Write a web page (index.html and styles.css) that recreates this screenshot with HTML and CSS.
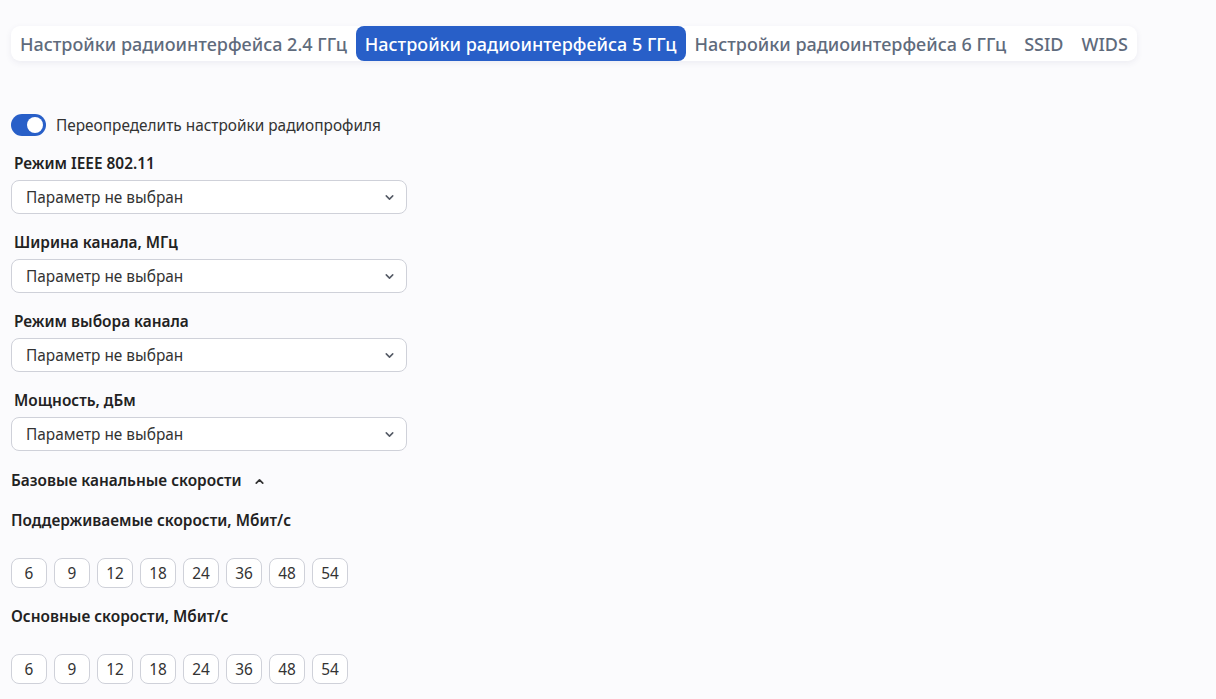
FILE: index.html
```html
<!DOCTYPE html>
<html lang="ru">
<head>
    <meta charset="UTF-8">
    <meta name="viewport" content="width=device-width, initial-scale=1.0">
    <title>Радиоинтерфейсы</title>
    <link rel="stylesheet" href="styles.css">
</head>
<body>
    <div class="page">
        <nav class="tabs">
            <button class="tab">Настройки радиоинтерфейса 2.4 ГГц</button>
            <button class="tab active">Настройки радиоинтерфейса 5 ГГц</button>
            <button class="tab">Настройки радиоинтерфейса 6 ГГц</button>
            <button class="tab">SSID</button>
            <button class="tab">WIDS</button>
        </nav>

        <form class="radio-form">
            <label class="switch-row">
                <span class="switch on"><span class="knob"></span></span>
                <span>Переопределить настройки радиопрофиля</span>
            </label>

            <div class="field">
                <div class="field-label">Режим IEEE 802.11</div>
                <div class="select">
                    <span>Параметр не выбран</span>
                    <svg class="chevron" viewBox="0 0 12 12"><path d="M3 4.5l3 3 3-3"/></svg>
                </div>
            </div>

            <div class="field">
                <div class="field-label">Ширина канала, МГц</div>
                <div class="select">
                    <span>Параметр не выбран</span>
                    <svg class="chevron" viewBox="0 0 12 12"><path d="M3 4.5l3 3 3-3"/></svg>
                </div>
            </div>

            <div class="field">
                <div class="field-label">Режим выбора канала</div>
                <div class="select">
                    <span>Параметр не выбран</span>
                    <svg class="chevron" viewBox="0 0 12 12"><path d="M3 4.5l3 3 3-3"/></svg>
                </div>
            </div>

            <div class="field">
                <div class="field-label">Мощность, дБм</div>
                <div class="select">
                    <span>Параметр не выбран</span>
                    <svg class="chevron" viewBox="0 0 12 12"><path d="M3 4.5l3 3 3-3"/></svg>
                </div>
            </div>

            <div class="section-toggle">
                <span>Базовые канальные скорости</span>
                <svg class="chevron up" viewBox="0 0 12 12"><path d="M3 7.5l3-3 3 3"/></svg>
            </div>

            <div class="rates">
                <div class="rates-title">Поддерживаемые скорости, Мбит/с</div>
                <div class="chips">
                    <span class="chip">6</span>
                    <span class="chip">9</span>
                    <span class="chip">12</span>
                    <span class="chip">18</span>
                    <span class="chip">24</span>
                    <span class="chip">36</span>
                    <span class="chip">48</span>
                    <span class="chip">54</span>
                </div>
            </div>

            <div class="rates">
                <div class="rates-title">Основные скорости, Мбит/с</div>
                <div class="chips">
                    <span class="chip">6</span>
                    <span class="chip">9</span>
                    <span class="chip">12</span>
                    <span class="chip">18</span>
                    <span class="chip">24</span>
                    <span class="chip">36</span>
                    <span class="chip">48</span>
                    <span class="chip">54</span>
                </div>
            </div>
        </form>
    </div>
</body>
</html>
```

FILE: styles.css
```css
body {
    margin: 0;
    background-color: #fbfbfd;
    font-family: "Noto Sans", sans-serif;
    color: #222;
}

.page {
    padding: 26px 11px 0;
}

/* tab strip */
.tabs {
    display: inline-flex;
    align-items: center;
    background: #fff;
    border-radius: 9px;
    box-shadow: 0 2px 6px rgba(60, 70, 110, 0.08);
    height: 35px;
}

.tab {
    border: none;
    background: none;
    font-family: "Noto Sans", sans-serif;
    font-size: 18px;
    font-weight: 500;
    color: #5f6b7c;
    height: 35px;
    padding: 0 9px;
    border-radius: 8px;
    cursor: pointer;
    white-space: nowrap;
}

.tab.active {
    background-color: #285fc8;
    color: #fff;
}

/* form */
.radio-form {
    margin-top: 53px;
    width: 396px;
    font-size: 15.4px;
}

.switch-row {
    display: flex;
    align-items: center;
    gap: 10px;
    color: #333;
    height: 22px;
}

.switch {
    width: 35px;
    height: 22px;
    border-radius: 11px;
    background: #c9ccd4;
    position: relative;
    flex-shrink: 0;
}

.switch.on {
    background: #285fc8;
}

.switch .knob {
    position: absolute;
    top: 3px;
    left: 3px;
    width: 16px;
    height: 16px;
    border-radius: 50%;
    background: #fff;
}

.switch.on .knob {
    left: 16px;
}

.field {
    margin-top: 17px;
}

.field + .field {
    margin-top: 18px;
}

.field-label {
    font-weight: 600;
    color: #222;
    padding: 1px 0 0 3px;
    line-height: 20px;
    margin-bottom: 6px;
}

.select {
    display: flex;
    align-items: center;
    justify-content: space-between;
    height: 32px;
    border: 1px solid #cfd1d9;
    border-radius: 8px;
    background: #fff;
    padding: 0 10px 0 14px;
    color: #333;
}

.chevron {
    width: 13px;
    height: 13px;
    fill: none;
    stroke: #555b66;
    stroke-width: 1.4;
    stroke-linecap: round;
    stroke-linejoin: round;
}

.section-toggle {
    display: flex;
    align-items: center;
    gap: 11px;
    margin-top: 20px;
    font-weight: 600;
    line-height: 20px;
}

.chevron.up {
    stroke: #333;
    stroke-width: 1.6;
}

.rates {
    margin-top: 20px;
}

.rates + .rates {
    margin-top: 19px;
}

.rates-title {
    font-weight: 600;
    line-height: 20px;
}

.chips {
    display: flex;
    gap: 7px;
    margin-top: 27px;
}

.chip {
    display: flex;
    align-items: center;
    justify-content: center;
    width: 34px;
    height: 28px;
    border: 1px solid #cfd1d9;
    border-radius: 8px;
    background: #fff;
    color: #333;
}
```
